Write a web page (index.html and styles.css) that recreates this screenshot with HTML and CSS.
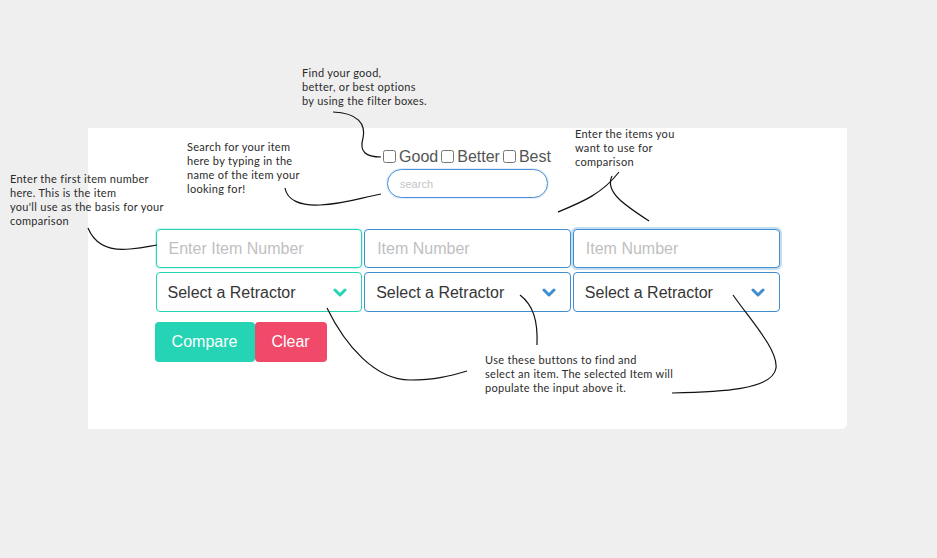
FILE: index.html
```html
<!DOCTYPE html>
<html lang="en">
<head>
    <meta charset="UTF-8">
    <meta name="viewport" content="width=device-width, initial-scale=1.0">
    <title>Retractor Compare</title>
    <link rel="stylesheet" href="styles.css">
</head>
<body>
    <div class="board">
        <div class="card">
            <div class="filters">
                <label class="filter"><input type="checkbox">Good</label>
                <label class="filter"><input type="checkbox">Better</label>
                <label class="filter"><input type="checkbox">Best</label>
            </div>
            <input class="search" type="text" placeholder="search">

            <div class="fields">
                <input class="field first" type="text" placeholder="Enter Item Number">
                <input class="field" type="text" placeholder="Item Number">
                <input class="field focused" type="text" placeholder="Item Number">

                <div class="select first">
                    <select><option>Select a Retractor</option></select>
                    <svg class="chevron" width="14" height="9" viewBox="0 0 14 9"><polyline points="2,2 7,7 12,2" fill="none" stroke-width="3" stroke-linecap="round" stroke-linejoin="round"/></svg>
                </div>
                <div class="select">
                    <select><option>Select a Retractor</option></select>
                    <svg class="chevron" width="14" height="9" viewBox="0 0 14 9"><polyline points="2,2 7,7 12,2" fill="none" stroke-width="3" stroke-linecap="round" stroke-linejoin="round"/></svg>
                </div>
                <div class="select">
                    <select><option>Select a Retractor</option></select>
                    <svg class="chevron" width="14" height="9" viewBox="0 0 14 9"><polyline points="2,2 7,7 12,2" fill="none" stroke-width="3" stroke-linecap="round" stroke-linejoin="round"/></svg>
                </div>
            </div>

            <div class="buttons">
                <button class="btn compare">Compare</button>
                <button class="btn clear">Clear</button>
            </div>
        </div>

        <!-- notes over the page -->
        <div class="note note-filter">Find your good,<br>better, or best options<br>by using the filter boxes.</div>
        <div class="note note-search">Search for your item<br>here by typing in the<br>name of the item your<br>looking for!</div>
        <div class="note note-items">Enter the items you<br>want to use for<br>comparison</div>
        <div class="note note-first">Enter the first item number<br>here. This is the item<br>you'll use as the basis for your<br>comparison</div>
        <div class="note note-buttons">Use these buttons to find and<br>select an item. The selected Item will<br>populate the input above it.</div>

        <svg class="lines" width="937" height="558" viewBox="0 0 937 558">
            <path d="M333 112 C 358 113, 366 124, 363 138 C 359 152, 366 157, 381 157"/>
            <path d="M285 188 C 287 200, 300 206, 320 205 C 345 204, 360 198, 381 194"/>
            <path d="M88 228 C 95 245, 110 251, 130 249 C 145 248, 150 246, 157 245"/>
            <path d="M558 212 C 582 202, 602 194, 619 172"/>
            <path d="M612 176 C 604 192, 626 206, 649 221"/>
            <path d="M327 308 C 345 345, 375 380, 410 380 C 435 380, 450 376, 467 371"/>
            <path d="M520 295 C 533 305, 538 320, 537 345"/>
            <path d="M733 295 C 752 322, 778 350, 776 368 C 773 390, 720 392, 672 393"/>
        </svg>
    </div>
</body>
</html>
```

FILE: styles.css
```css
body {
    margin: 0;
    background-color: #efefef;
    font-family: "Liberation Sans", Arial, sans-serif;
}
.board {
    position: relative;
    width: 937px;
    height: 558px;
    padding: 128px 0 0 88px;
    box-sizing: border-box;
}
.card {
    width: 759px;
    height: 301px;
    background: white;
    border-radius: 0 0 6px 0;
    padding-top: 20px;
    box-sizing: border-box;
    display: flex;
    flex-direction: column;
    align-items: center;
}
.filters {
    display: flex;
    align-items: center;
    height: 17px;
    margin-left: 2px;
}
.filter {
    display: flex;
    align-items: center;
    font-size: 16px;
    color: #555;
    margin-right: 3px;
}
.filter input {
    width: 13px;
    height: 13px;
    margin: 0 3px 0 0;
}
.search {
    margin-top: 4px;
    width: 161px;
    height: 29px;
    box-sizing: border-box;
    border: 1px solid #4a90d9;
    border-radius: 15px;
    padding: 0 12px;
    font-family: inherit;
    font-size: 11px;
    outline: none;
    box-shadow: 0 0 0 1px rgba(74, 144, 217, 0.15);
}
.search::placeholder {
    color: #c4c4c4;
}
.fields {
    margin-top: 31px;
    width: 624px;
    display: grid;
    grid-template-columns: repeat(3, minmax(0, 1fr));
    column-gap: 2px;
    row-gap: 4px;
}
.field {
    width: 100%;
    min-width: 0;
    height: 39px;
    box-sizing: border-box;
    border: 1px solid #3e8ed0;
    border-radius: 4px;
    padding: 0 12px;
    font-family: inherit;
    font-size: 16px;
    outline: none;
    margin: 0;
}
.field::placeholder {
    color: #bfbfbf;
}
.field.first {
    border-color: #24d4b4;
    box-shadow: 0 0 0 1px rgba(36, 212, 180, 0.2);
}
.field.focused {
    box-shadow: 0 0 0 2px rgba(62, 142, 208, 0.3);
}
.select {
    position: relative;
    height: 40px;
}
.select select {
    appearance: none;
    width: 100%;
    height: 40px;
    box-sizing: border-box;
    border: 1px solid #3e8ed0;
    border-radius: 4px;
    background: white;
    padding: 0 11px;
    font-family: inherit;
    font-size: 16px;
    color: #363636;
    outline: none;
}
.select.first select {
    border-color: #24d4b4;
}
.chevron {
    position: absolute;
    right: 15px;
    top: 16px;
    stroke: #3e8ed0;
}
.select.first .chevron {
    stroke: #24d4b4;
}
.buttons {
    width: 624px;
    margin-top: 10px;
    display: flex;
}
.btn {
    height: 40px;
    border: none;
    border-radius: 4px;
    color: white;
    font-family: inherit;
    font-size: 16px;
    padding: 0;
    cursor: pointer;
}
.compare {
    width: 100px;
    margin-left: -1px;
    background: #24d4b4;
}
.clear {
    width: 72px;
    background: #f0496a;
}

.note {
    position: absolute;
    font-family: Lato, "Open Sans", sans-serif;
    font-size: 11px;
    letter-spacing: 0.3px;
    line-height: 14px;
    color: #2b2b2b;
    white-space: nowrap;
}
.note-filter { left: 302px; top: 66px; }
.note-search { left: 187px; top: 140px; }
.note-items { left: 575px; top: 127px; }
.note-first { left: 10px; top: 172px; }
.note-buttons { left: 485px; top: 353px; }

.lines {
    position: absolute;
    left: 0;
    top: 0;
    pointer-events: none;
}
.lines path {
    fill: none;
    stroke: #111;
    stroke-width: 1.2;
}
```
